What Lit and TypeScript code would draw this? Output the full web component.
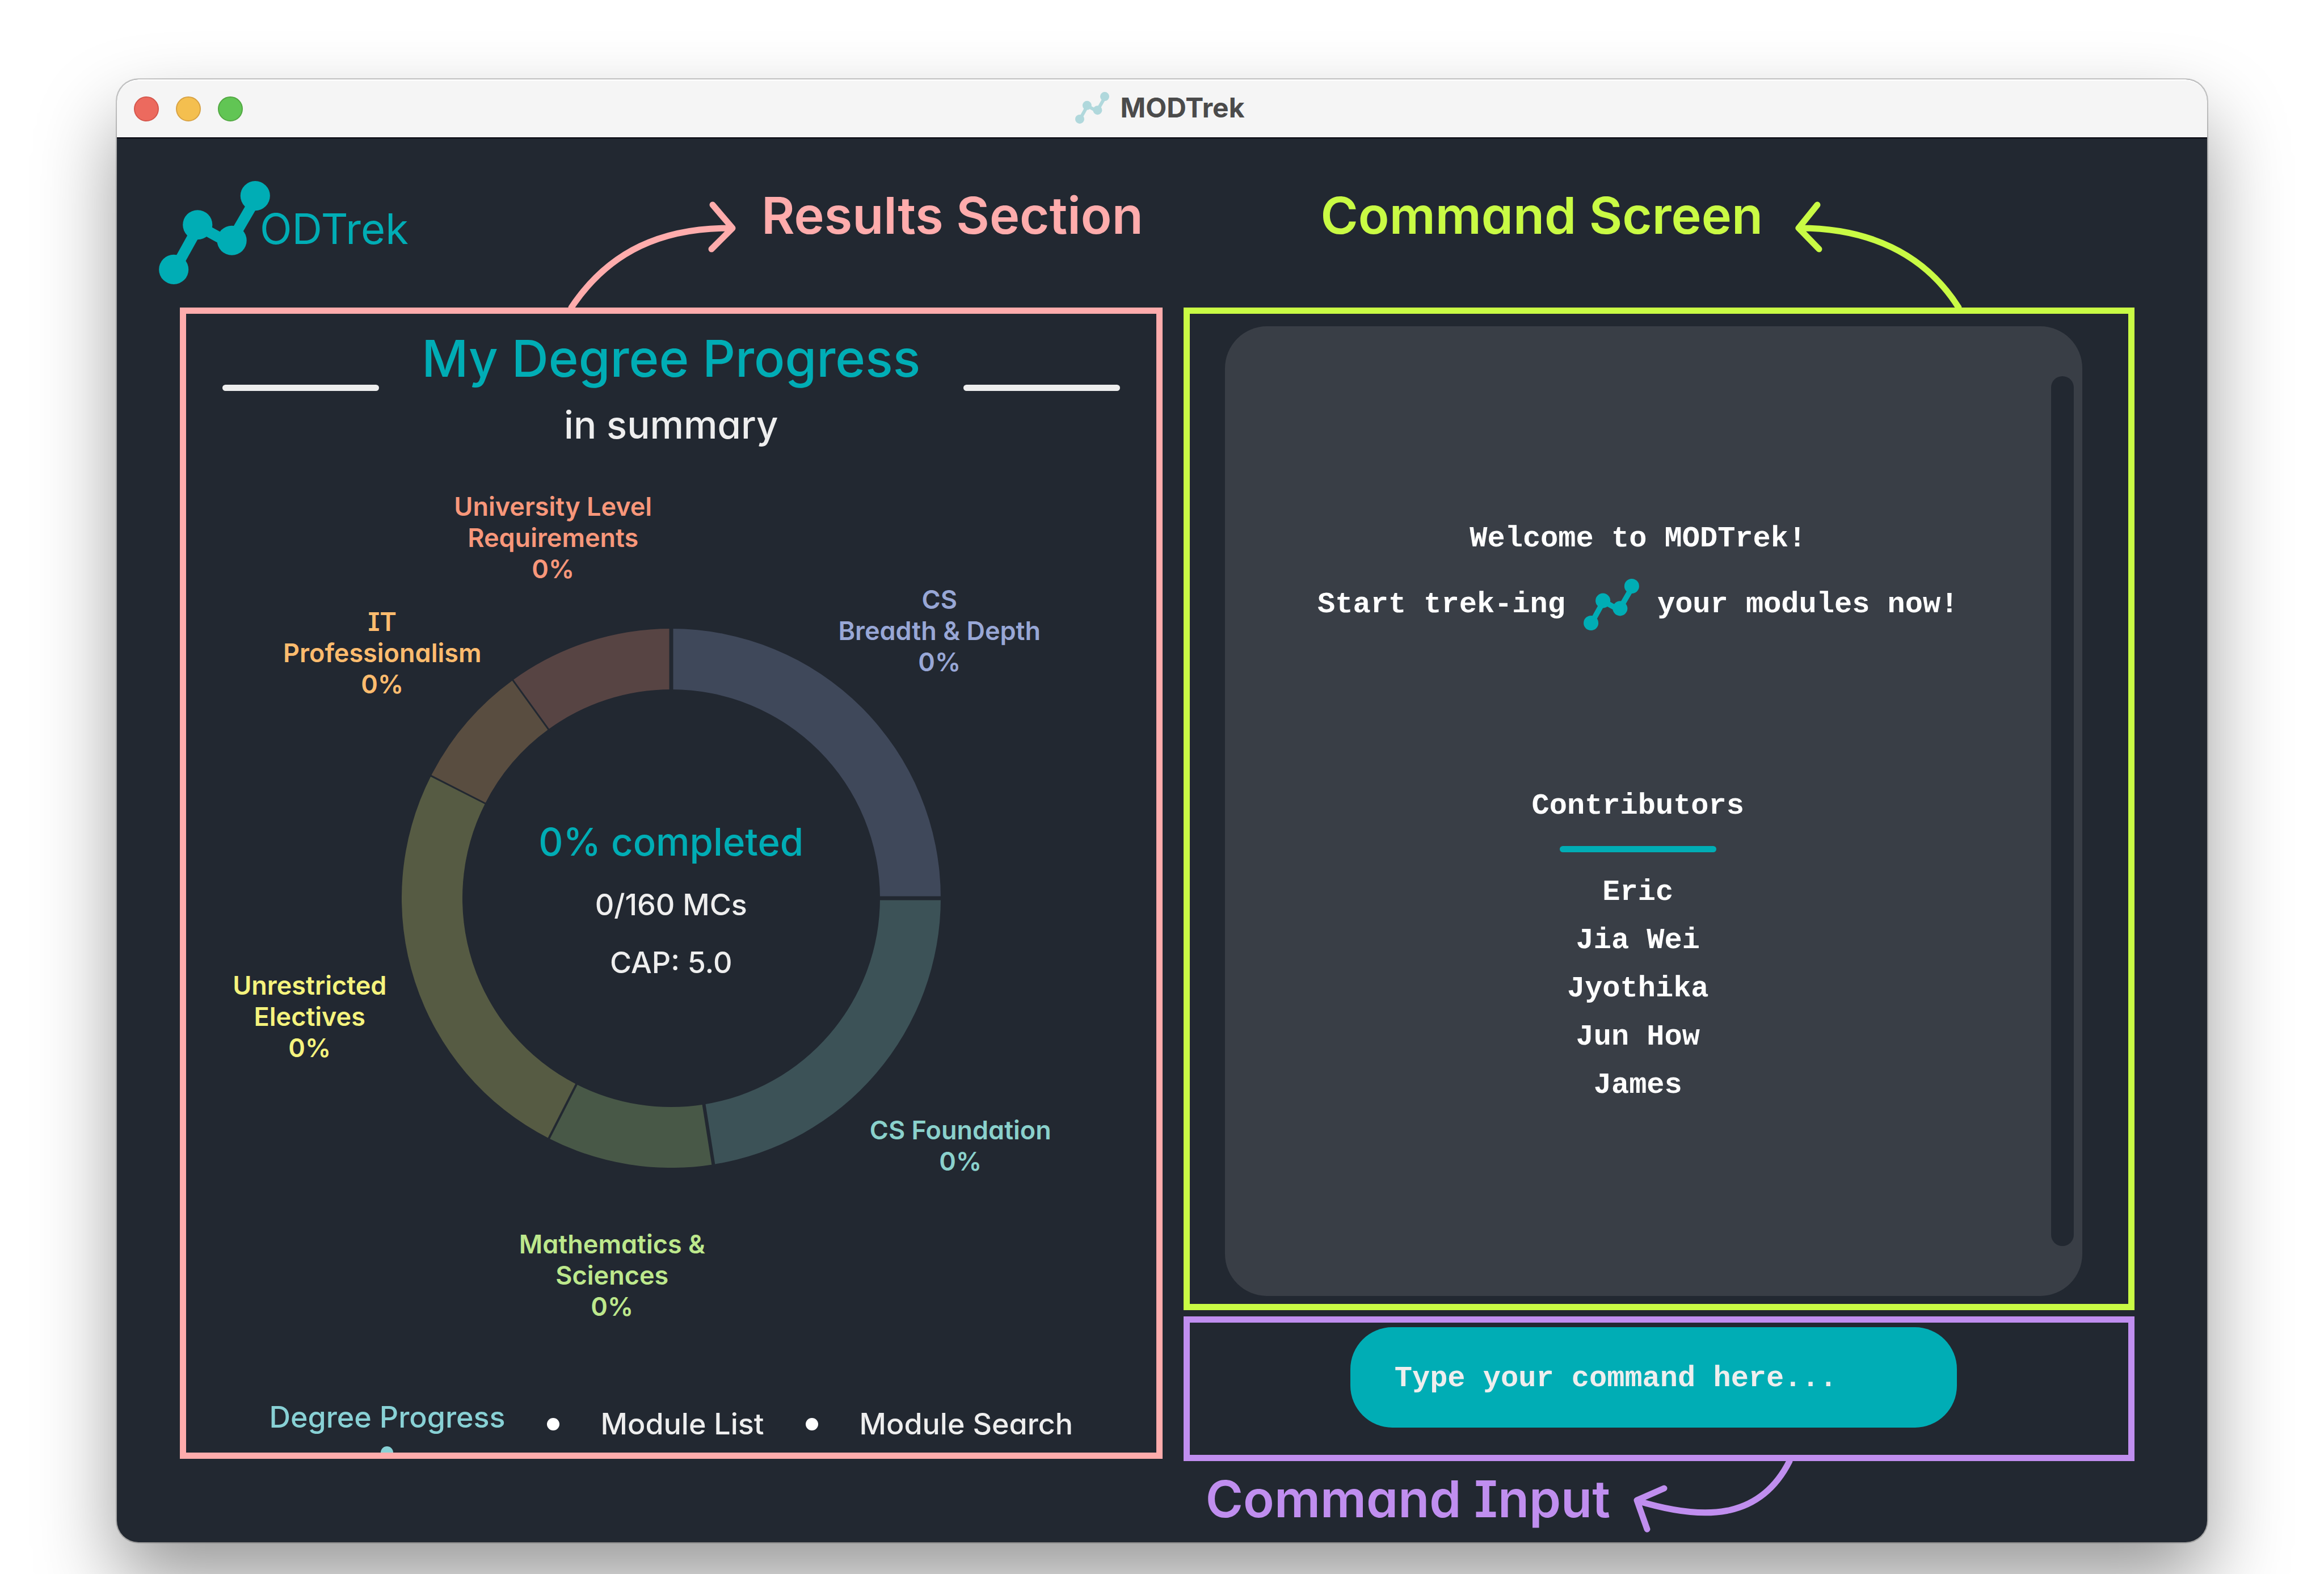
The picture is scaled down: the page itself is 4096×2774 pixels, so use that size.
import { LitElement, html, svg, css } from "lit";
import { customElement, property, state } from "lit/decorators.js";
import { classMap } from "lit/directives/class-map.js";
import { styleMap } from "lit/directives/style-map.js";

interface Requirement {
  lines: string[];
  credits: number;
  color: string;
  gap: number;
  x: number;
  y: number;
}

const REQUIREMENTS: Requirement[] = [
  { lines: ["CS", "Breadth & Depth"], credits: 40, color: "#98a7d6", gap: 7, x: 473, y: -472 },
  { lines: ["CS Foundation"], credits: 36, color: "#8ad1cc", gap: 6, x: 510, y: 436 },
  { lines: ["Mathematics &", "Sciences"], credits: 16, color: "#bde88c", gap: 4, x: -104, y: 664 },
  { lines: ["Unrestricted", "Electives"], credits: 40, color: "#f5f37d", gap: 3, x: -637, y: 208 },
  { lines: ["IT", "Professionalism"], credits: 12, color: "#ffbc6e", gap: 3, x: -509, y: -433 },
  { lines: ["University Level", "Requirements"], credits: 16, color: "#f8977a", gap: 7, x: -208, y: -636 },
];
const TOTAL = 160;
const OUTER = 475;
const INNER = 368;

const CONTRIBUTORS = ["Eric", "Jia Wei", "Jyothika", "Jun How", "James"];
const TABS = ["Degree Progress", "Module List", "Module Search"];

const point = (radius: number, turn: number) => {
  const a = turn * 2 * Math.PI;
  return `${(radius * Math.sin(a)).toFixed(2)} ${(-radius * Math.cos(a)).toFixed(2)}`;
};

@customElement("trek-mark")
export class TrekMark extends LitElement {
  static styles = css`
    :host {
      display: block;
      flex: none;
    }
    svg {
      display: block;
      width: 100%;
      height: 100%;
    }
  `;

  render() {
    return html`<svg viewBox="0 0 214 199" fill="currentColor" aria-hidden="true">
      <path
        d="M28.5 174 74.5 91M74.5 86 140.5 122M140 114.5 190 28.5"
        fill="none"
        stroke="currentColor"
        stroke-width="21"
      />
      <circle cx="28.5" cy="170.5" r="28.5" />
      <circle cx="74.5" cy="84.5" r="28.5" />
      <circle cx="140.5" cy="114.5" r="28.5" />
      <circle cx="185.5" cy="28.5" r="28.5" />
    </svg>`;
  }
}

@customElement("degree-chart")
export class DegreeChart extends LitElement {
  @property({ attribute: false }) requirements: Requirement[] = [];

  static styles = css`
    :host {
      display: grid;
      place-items: center;
      position: relative;
      flex: 1;
    }
    .ring {
      grid-area: 1 / 1;
      width: 950px;
      height: 950px;
    }
    .totals {
      grid-area: 1 / 1;
      display: flex;
      flex-direction: column;
      align-items: center;
      padding-top: 26px;
      color: #eeeeee;
      font-size: 52px;
      line-height: 102px;
    }
    .completed {
      margin-bottom: 20px;
      color: #00adb5;
      font-size: 67px;
      line-height: 80px;
    }
    .label {
      position: absolute;
      transform: translate(-50%, -50%);
      font-size: 45px;
      font-weight: 600;
      line-height: 55px;
      text-align: center;
      white-space: nowrap;
    }
    .label span {
      display: block;
    }
  `;

  private arcs() {
    let turn = 0;
    return this.requirements.map((r) => {
      const from = turn;
      turn += r.credits / TOTAL;
      return { ...r, from, to: turn };
    });
  }

  render() {
    const arcs = this.arcs();
    return html`
      <svg class="ring" viewBox="-475 -475 950 950" aria-hidden="true">
        ${arcs.map(
          (a) => svg`<path
            d="M${point(OUTER, a.from)}A${OUTER} ${OUTER} 0 0 1 ${point(OUTER, a.to)}L${point(INNER, a.to)}A${INNER} ${INNER} 0 0 0 ${point(INNER, a.from)}Z"
            fill=${a.color} fill-opacity="0.25" />`
        )}
        ${arcs.map(
          (a) => svg`<path d="M${point(INNER - 4, a.to)}L${point(OUTER + 4, a.to)}"
            stroke="#222831" stroke-width=${a.gap} />`
        )}
      </svg>
      <div class="totals">
        <div class="completed">0% completed</div>
        <div>0/160 MCs</div>
        <div>CAP: 5.0</div>
      </div>
      ${arcs.map(
        (a) => html`<div
          class="label"
          style=${styleMap({
            color: a.color,
            left: `calc(50% + ${a.x}px)`,
            top: `calc(50% + ${a.y}px)`,
          })}
        >
          ${a.lines.map((l) => html`<span>${l}</span>`)}<span>0%</span>
        </div>`
      )}
    `;
  }
}

@customElement("app-root")
export class AppRoot extends LitElement {
  @state() private tab = 0;

  static styles = css`
    :host {
      display: block;
      font-family: Inter, "Open Sans", sans-serif;
      font-weight: 500;
      font-feature-settings: "cv11", "cv08";
      color: #eeeeee;
    }
    * {
      box-sizing: border-box;
    }
    button {
      padding: 0;
      border: 0;
      background: none;
      color: inherit;
      font: inherit;
      font-feature-settings: inherit;
    }
    h1,
    h2,
    p,
    ul {
      margin: 0;
      padding: 0;
      font: inherit;
      list-style: none;
    }
    .page {
      display: flex;
      min-height: 100vh;
      padding: 140px 206px 56px;
      background: #ffffff;
      overflow: hidden;
    }
    .window {
      flex: 1;
      display: flex;
      flex-direction: column;
      border-radius: 38px;
      background: #222831;
      box-shadow:
        0 0 0 2px rgba(0, 0, 0, 0.2),
        0 70px 140px rgba(0, 0, 0, 0.4);
    }
    .titlebar {
      display: grid;
      grid-template-columns: 1fr auto 1fr;
      align-items: center;
      height: 104px;
      padding: 0 30px;
      border-radius: 38px 38px 0 0;
      border-top: 2px solid #ffffff;
      border-bottom: 2px solid #02030c;
      background: #f5f5f5;
    }
    .lights {
      display: flex;
      gap: 30px;
    }
    .light {
      width: 44px;
      height: 44px;
      border: 2px solid;
      border-radius: 50%;
    }
    .close {
      background: #ec6a5e;
      border-color: #d5574d;
    }
    .minimise {
      background: #f4bf4f;
      border-color: #d8a243;
    }
    .zoom {
      background: #61c554;
      border-color: #52a842;
    }
    .title {
      display: flex;
      align-items: center;
      gap: 20px;
      padding: 0 8px 4px 0;
      color: #4b4b4b;
      font-size: 48px;
      font-weight: 700;
      line-height: 60px;
    }
    .title trek-mark {
      width: 60px;
      height: 56px;
      color: #b0d8dc;
    }
    .brand {
      display: flex;
      align-items: center;
      height: 298px;
      padding: 33px 0 0 74px;
      color: #00adb5;
      font-size: 74px;
      font-weight: 400;
      line-height: 88px;
    }
    .brand trek-mark {
      width: 196px;
      height: 182px;
    }
    .brand span {
      margin: 0 0 14px -18px;
    }
    .main {
      flex: 1;
      display: grid;
      grid-template-columns: minmax(0, 1731fr) minmax(0, 1676fr);
      gap: 37px;
      padding: 0 128px 143px 111px;
    }
    .frame {
      position: relative;
      display: flex;
      flex-direction: column;
      border: 11px solid;
    }
    .frame.results {
      margin-bottom: 4px;
      border-color: #ffacac;
    }
    .frame.screen {
      flex: 1;
      border-color: #c9fb44;
      padding: 22px 81px 14px 62px;
    }
    .frame.entry {
      border-color: #c08eef;
      padding: 8px 81px 48px 62px;
      align-items: center;
    }
    .results-body {
      flex: 1;
      display: flex;
      flex-direction: column;
      overflow: hidden;
    }
    .right {
      display: flex;
      flex-direction: column;
      gap: 11px;
    }
    .heading {
      display: flex;
      align-items: center;
      justify-content: space-between;
      padding: 24px 64px 0;
      text-align: center;
    }
    .rule {
      width: 276px;
      height: 11px;
      border-radius: 6px;
      background: #eeeeee;
    }
    .heading h1 {
      color: #00adb5;
      font-size: 90px;
      line-height: 110px;
    }
    .heading p {
      margin-top: 22px;
      font-size: 67px;
      line-height: 80px;
    }
    .tabs {
      display: flex;
      justify-content: center;
      align-items: center;
      gap: 73px;
      height: 184px;
      padding-top: 84px;
      font-size: 52px;
      line-height: 64px;
    }
    .tab {
      position: relative;
    }
    .tab.active {
      padding-bottom: 24px;
      color: #88d1d5;
    }
    .tab.active::after {
      content: "";
      position: absolute;
      left: calc(50% - 11px);
      bottom: -17px;
      width: 22px;
      height: 22px;
      border-radius: 50%;
      background: currentColor;
    }
    .dot {
      width: 22px;
      height: 22px;
      border-radius: 50%;
      background: #ffffff;
    }
    .console {
      flex: 1;
      display: flex;
      padding: 88px 15px 88px 0;
      border-radius: 74px;
      background: #393e46;
      color: #ffffff;
      font: 700 52px/85px "Liberation Mono", monospace;
    }
    .output {
      flex: 1;
      display: flex;
      flex-direction: column;
      align-items: center;
      justify-content: center;
      padding-top: 2px;
      text-align: center;
    }
    .scroll {
      width: 40px;
      border-radius: 20px;
      background: #222831;
    }
    .greeting {
      display: flex;
      align-items: center;
      gap: 32px;
      height: 92px;
      margin: 28px 0 266px;
    }
    .greeting trek-mark {
      width: 98px;
      height: 91px;
      color: #00adb5;
    }
    .divider {
      width: 276px;
      height: 11px;
      margin: 28px 0;
      border-radius: 6px;
      background: #00adb5;
    }
    .command {
      width: 100%;
      max-width: 1069px;
      height: 177px;
      padding: 4px 78px 0;
      border: 0;
      border-radius: 74px;
      outline: none;
      background: #00adb5;
      color: #eeeeee;
      font: 700 52px/85px "Liberation Mono", monospace;
    }
    .command::placeholder {
      color: #eeeeee;
      opacity: 1;
    }
    .callout {
      position: absolute;
      display: flex;
      align-items: flex-start;
      font-size: 90px;
      font-weight: 600;
      line-height: 104px;
      white-space: nowrap;
    }
    .callout svg {
      overflow: visible;
      fill: none;
      stroke: currentColor;
      stroke-width: 11px;
      stroke-linecap: round;
      stroke-linejoin: round;
    }
    .callout.for-results {
      left: 673px;
      bottom: calc(100% + 11px);
      gap: 40px;
      color: #ffacac;
    }
    .callout.for-screen {
      right: 293px;
      bottom: calc(100% + 11px);
      gap: 52px;
      color: #c9fb44;
    }
    .callout.for-entry {
      right: 591px;
      top: calc(100% + 11px);
      gap: 36px;
      line-height: 134px;
      color: #c08eef;
    }
  `;

  private renderTabs() {
    return TABS.map(
      (name, i) => html`
        ${i > 0 ? html`<span class="dot"></span>` : ""}
        <button
          class=${classMap({ tab: true, active: i === this.tab })}
          @click=${() => (this.tab = i)}
        >${name}</button>
      `
    );
  }

  render() {
    return html`
      <div class="page">
        <div class="window">
          <header class="titlebar">
            <div class="lights">
              <button class="light close" aria-label="Close"></button>
              <button class="light minimise" aria-label="Minimise"></button>
              <button class="light zoom" aria-label="Zoom"></button>
            </div>
            <div class="title"><trek-mark></trek-mark><span>MODTrek</span></div>
          </header>
          <div class="brand"><trek-mark></trek-mark><span>ODTrek</span></div>
          <main class="main">
            <section class="frame results">
              <div class="callout for-results">
                <svg width="301" height="214" aria-hidden="true">
                  <path d="M6 214C74 112 169 74 284 74M255 33 290 74 253 111" />
                </svg>
                <span>Results Section</span>
              </div>
              <div class="results-body">
                <div class="heading">
                  <span class="rule"></span>
                  <div>
                    <h1>My Degree Progress</h1>
                    <p>in summary</p>
                  </div>
                  <span class="rule"></span>
                </div>
                <degree-chart .requirements=${REQUIREMENTS}></degree-chart>
                <nav class="tabs">${this.renderTabs()}</nav>
              </div>
            </section>
            <div class="right">
              <section class="frame screen">
                <div class="callout for-screen">
                  <span>Command Screen</span>
                  <svg width="299" height="214" aria-hidden="true">
                    <path d="M13 74C132 74 232 117 293 214M44 33 11 74 47 111" />
                  </svg>
                </div>
                <div class="console">
                  <div class="output">
                    <p>Welcome to MODTrek!</p>
                    <div class="greeting">
                      <span>Start trek-ing</span>
                      <trek-mark></trek-mark>
                      <span>your modules now!</span>
                    </div>
                    <h2>Contributors</h2>
                    <span class="divider"></span>
                    <ul>
                      ${CONTRIBUTORS.map((c) => html`<li>${c}</li>`)}
                    </ul>
                  </div>
                  <div class="scroll"></div>
                </div>
              </section>
              <section class="frame entry">
                <input
                  class="command"
                  type="text"
                  aria-label="Command"
                  placeholder="Type your command here..."
                />
                <div class="callout for-entry">
                  <span>Command Input</span>
                  <svg width="286" height="126" aria-hidden="true">
                    <path d="M280 0C227 105 127 105 12 70M59 48 11 69 29 120" />
                  </svg>
                </div>
              </section>
            </div>
          </main>
        </div>
      </div>
    `;
  }
}
